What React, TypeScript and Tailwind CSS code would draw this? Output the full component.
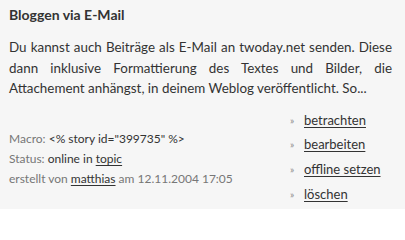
export default function App() {
  const actions = ["betrachten", "bearbeiten", "offline setzen", "löschen"]

  return (
    <div className="w-[405px] h-[209px] bg-[#f6f6f6] px-[9px] pt-[5px] text-[#333] font-['Lato','Liberation_Sans',sans-serif] overflow-hidden">
      <h2 className="text-[14px] font-bold leading-[20px]">Bloggen via E-Mail</h2>

      {/* teaser, justified like the original */}
      <div className="mt-[12px] text-[13.4px] leading-[20.5px] pr-[4px]">
        <div className="whitespace-nowrap text-justify [text-align-last:justify]">
          Du kannst auch Beiträge als E-Mail an twoday.net senden. Diese
        </div>
        <div className="whitespace-nowrap text-justify [text-align-last:justify]">
          dann inklusive Formattierung des Textes und Bilder, die
        </div>
        <div className="whitespace-nowrap">Attachement anhängst, in deinem Weblog veröffentlicht. So...</div>
      </div>

      <div className="mt-[9px] flex items-center">
        <div className="w-[281px] pt-[4px] text-[12px] leading-[20px]">
          <div>
            <span className="text-[#777]">Macro:</span> &lt;% story id="399735" %&gt;
          </div>
          <div>
            <span className="text-[#777]">Status:</span> online in{" "}
            <a className="underline underline-offset-2 decoration-[#333]">topic</a>
          </div>
          <div className="text-[#777]">
            erstellt von{" "}
            <a className="text-[#333] underline underline-offset-2 decoration-[#333]">matthias</a>{" "}
            am 12.11.2004 17:05
          </div>
        </div>

        <ul className="text-[13px] leading-[24.7px]">
          {actions.map((a) => (
            <li key={a} className="flex items-center">
              <span className="w-[14px] text-[10px] text-[#888]">»</span>
              <a className="underline underline-offset-2 decoration-[#333]">{a}</a>
            </li>
          ))}
        </ul>
      </div>
    </div>
  )
}
